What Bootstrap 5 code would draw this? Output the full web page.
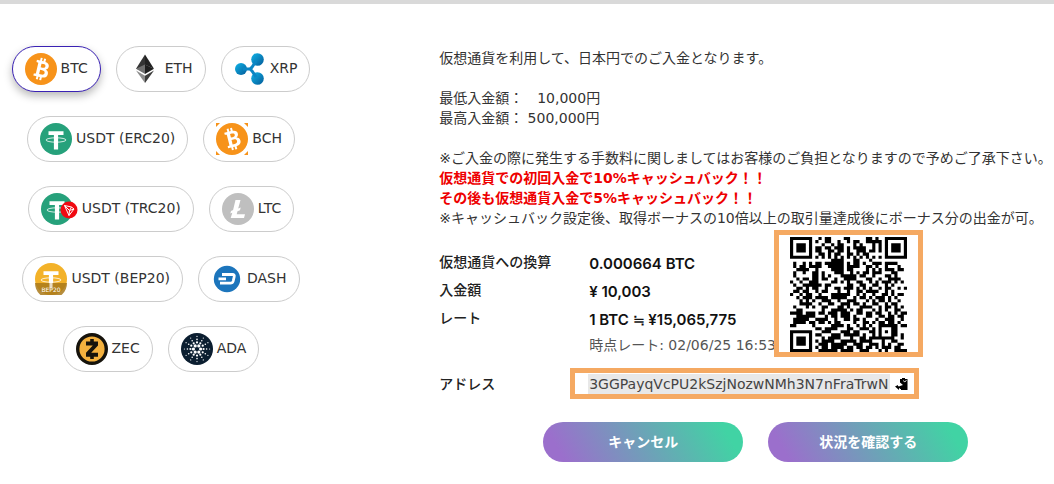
<!DOCTYPE html>
<html lang="ja">
<head>
<meta charset="utf-8">
<meta name="viewport" content="width=device-width, initial-scale=1">
<title>仮想通貨での入金</title>
<link href="https://cdn.jsdelivr.net/npm/bootstrap@5.3.0/dist/css/bootstrap.min.css" rel="stylesheet">
<style>
  body { font-family: "DejaVu Sans", "Noto Sans CJK JP", sans-serif; font-size: 14px; line-height: 20px; color: #333; background: #fff; border-top: 4px solid #d9d9d9; }
  .coin-list { max-width: 322px; gap: 24px 15px; padding-top: 42px; }
  .coin { height: 46px; padding: 0 12px; gap: 4px; border: 1px solid #ccc; border-radius: 23px; background: #fff; color: #333; }
  .coin.selected { border-color: #3a22b4; box-shadow: 0 4px 8px rgba(0,0,0,.28); }
  .coin span { padding-bottom: 2px; }
  .intro { padding-top: 44px; white-space: nowrap; }
  .intro strong { color: #ee0000; }
  .details { display: grid; grid-template-columns: 150px 1fr; margin-top: 20px; }
  .details dt { font-weight: 500; line-height: 28px; color: #222; }
  .details dd { line-height: 24px; padding-top: 4px; color: #111; white-space: nowrap; }
  .amount { font-family: Inter, "Noto Sans CJK JP", sans-serif; font-size: 15px; font-weight: 600; }
  .details .stamp { display: block; line-height: 26px; color: #555; }
  .qr-frame { position: absolute; left: 335px; top: 226px; border: 5px solid #f5a962; padding: 2px 11px 0; line-height: 0; background: #fff; }
  .address-row { margin-top: 10px; }
  .address-label { width: 131px; font-weight: 500; color: #222; }
  .address-box { border: 5px solid #f5a962; height: 31px; padding: 0 5px 0 13px; gap: 5px; background: #fff; }
  .address-box input { width: 302px; height: 20px; border: 0; padding: 0 1px; background: #e8e8e8; color: #444; font-size: 14px; }
  .actions { gap: 25px; margin-top: 23px; padding-left: 104px; }
  .action { width: 200px; height: 40px; border: 0; border-radius: 20px; color: #fff; font-weight: 700; background: linear-gradient(60deg, #9b6fcc 10%, #41d3a4 90%); }
</style>
</head>
<body>
<svg width="0" height="0" class="position-absolute" aria-hidden="true">
  <defs>
    <g id="bitcoin-b">
      <path fill="#fff" fill-rule="evenodd" d="M10 8h3.200V5h2v3h1.500V5h2v3.200c3 .3 4.300 1.800 4.300 3.800 0 1.700-.8 2.900-2.300 3.500 2.200.6 3.100 2 3.100 4 0 3-2.100 4.400-5.100 4.600V27h-2v-2.900h-1.500V27h-2v-2.900H10V22l2-.4V10.500l-2-.4zM15.300 10.700v3.700h1.800c1.700 0 2.600-.6 2.600-1.900s-.8-1.800-2.500-1.800zm0 6.200v4.500h2.200c1.900 0 2.900-.8 2.900-2.300s-1.100-2.200-3-2.200z"/>
    </g>
    <g id="tether">
      <path fill="#fff" d="M8.500 8.200h15V12h-5.400v14.500h-4.200V12H8.500z"/>
      <ellipse cx="16" cy="17" rx="10" ry="2.200" fill="none" stroke="#fff" stroke-width=".8"/>
    </g>
  </defs>
</svg>
<main class="container-fluid p-0">
  <div class="row g-0">
    <nav class="col-5" aria-label="通貨">
      <div class="coin-list d-flex flex-wrap justify-content-center">
        <button type="button" class="coin selected d-flex align-items-center" aria-pressed="true">
          <svg width="32" height="32" viewBox="0 0 32 32"><circle cx="16" cy="16" r="16" fill="#f7931a"/><use href="#bitcoin-b" transform="rotate(13 16 16)"/></svg><span>BTC</span></button>
        <button type="button" class="coin d-flex align-items-center">
          <svg width="32" height="32" viewBox="0 0 32 32"><path fill="#343434" d="M16 1.500v16.800L7 15.700z"/><path fill="#1f1f1f" d="m16 11.500 9 4.200-9 5.300z"/><path fill="#222" d="m16 1.500 9 14.200-9-4z"/><path fill="#707070" d="m16 11.500-9 4.200 9 5.300z"/><path fill="#8c8c8c" d="m7 17.500 9 5.300V30z"/><path fill="#3c3c3b" d="m25 17.500-9 5.300V30z"/></svg><span>ETH</span></button>
        <button type="button" class="coin d-flex align-items-center">
          <svg width="32" height="32" viewBox="0 0 32 32"><defs><linearGradient id="rip" x2="1" y2="1"><stop stop-color="#10b4e8"/><stop offset="1" stop-color="#045b99"/></linearGradient></defs><g fill="url(#rip)"><circle cx="7" cy="16" r="6"/><circle cx="23.500" cy="6.500" r="6.300"/><circle cx="23.500" cy="25.500" r="6.300"/></g><path d="M9 16h7l1.800-1.500L22 8m-6 8 2 2 4 6" fill="none" stroke="#0b86c4" stroke-width="3"/></svg><span>XRP</span></button>
        <button type="button" class="coin d-flex align-items-center">
          <svg width="32" height="32" viewBox="0 0 32 32"><circle cx="16" cy="16" r="16" fill="#26a17b"/><use href="#tether"/></svg><span>USDT (ERC20)</span></button>
        <button type="button" class="coin d-flex align-items-center">
          <svg width="32" height="32" viewBox="0 0 32 32"><path fill="#f7931a" d="M0 0h4L0 4zm28 0h4v4zM0 28v4h4zm32 0v4h-4z"/><circle cx="16" cy="16" r="16" fill="#f7931a"/><use href="#bitcoin-b" transform="rotate(-14 16 16)"/></svg><span>BCH</span></button>
        <button type="button" class="coin d-flex align-items-center">
          <svg width="37" height="32" viewBox="0 0 37 32"><circle cx="16" cy="16" r="16" fill="#26a17b"/><use href="#tether"/><circle cx="28" cy="17" r="8.500" fill="#f00a12"/><path fill="none" stroke="#fff" stroke-width="1" stroke-linejoin="round" d="m23.500 12.500 7 1.500 2.500 2-5 6.500zM23.500 12.500l5 5 4.500-1.500M30.500 14l-2 3.500-.5 5"/></svg><span>USDT (TRC20)</span></button>
        <button type="button" class="coin d-flex align-items-center">
          <svg width="32" height="32" viewBox="0 0 32 32"><circle cx="16" cy="16" r="16" fill="#bfbfbf"/><path fill="#fff" d="M13.500 7h5L16.200 15.500l2.500-1-.7 2.700-2.500 1-.8 3h8.300l-1 3.800H8.700l1.600-5.200-2 .8.700-2.700 2.100-.8z"/></svg><span>LTC</span></button>
        <button type="button" class="coin d-flex align-items-center">
          <svg width="32" height="32" viewBox="0 0 32 32"><circle cx="16" cy="16" r="16" fill="#f3b229"/><use href="#tether"/><path fill="#a9791a" fill-opacity=".85" d="M0 20h32a16 16 0 0 1-32 0z"/><path fill="#fff" opacity=".7" d="M14.500 20h3v5h-3z"/><text x="16" y="29" text-anchor="middle" font-size="6" fill="#fff">BEP20</text></svg><span>USDT (BEP20)</span></button>
        <button type="button" class="coin d-flex align-items-center">
          <svg width="32" height="32" viewBox="0 0 32 32"><circle cx="16" cy="16" r="13.200" fill="#1c75bc"/><path fill="none" stroke="#fff" stroke-width="2.800" stroke-linejoin="round" d="M11 11.500h10.500q2.300 0 1.700 2.200l-1 4.300q-.6 2.200-2.800 2.200H9M7.500 15.800h7.500"/></svg><span>DASH</span></button>
        <button type="button" class="coin d-flex align-items-center">
          <svg width="32" height="32" viewBox="0 0 32 32"><circle cx="16" cy="16" r="14.300" fill="#f4b13e" stroke="#16130c" stroke-width="3.400"/><path fill="#16130c" d="M14.200 6h3.600v2.500H22v4l-6.800 7.200H22v4h-4.200V26h-3.600v-2.300H10v-4l6.800-7.200H10v-4h4.200z"/></svg><span>ZEC</span></button>
        <button type="button" class="coin d-flex align-items-center">
          <svg width="32" height="32" viewBox="0 0 32 32"><circle cx="16" cy="16" r="16" fill="#0b1e30"/><g id="ada-dots" fill="#fff"></g></svg><span>ADA</span></button>
      </div>
    </nav>
    <section class="col-7 position-relative">
      <p class="intro mb-0">仮想通貨を利用して、日本円でのご入金となります。<br><br>最低入金額：　10,000円<br>最高入金額： 500,000円<br><br>※ご入金の際に発生する手数料に関しましてはお客様のご負担となりますので予めご了承下さい。<br><strong>仮想通貨での初回入金で10%キャッシュバック！！<br>その後も仮想通貨入金で5%キャッシュバック！！</strong><br>※キャッシュバック設定後、取得ボーナスの10倍以上の取引量達成後にボーナス分の出金が可。</p>
      <dl class="details mb-0">
        <dt>仮想通貨への換算</dt><dd class="mb-0"><span class="amount">0.000664 BTC</span></dd>
        <dt>入金額</dt><dd class="mb-0"><span class="amount">¥ 10,003</span></dd>
        <dt>レート</dt><dd class="mb-0"><span class="amount">1 BTC ≒ ¥15,065,775</span><span class="stamp">時点レート: 02/06/25 16:53</span></dd>
      </dl>
      <div class="qr-frame"><svg id="qr" width="117" height="115" viewBox="0 0 37 37" preserveAspectRatio="none" role="img" aria-label="入金用QRコード"><path fill="#000"/></svg></div>
      <div class="address-row d-flex align-items-center">
        <label class="address-label" for="address">アドレス</label>
        <div class="address-box d-flex align-items-center">
          <input id="address" type="text" readonly value="3GGPayqVcPU2kSzjNozwNMh3N7nFraTrwN">
          <button type="button" class="btn p-0 border-0 d-flex" aria-label="コピー"><svg width="14" height="14" viewBox="0 0 14 14"><path d="M5 2h2V1h3v1h2.500v11H6v-1H5V9l3-1-3-2.500z"/><path d="M0 9.500 3 8v1.200h3v2H4V13z"/><path fill="none" stroke="#fff" stroke-width=".8" d="M8 3.500 10 5l1.500-2"/></svg></button>
        </div>
      </div>
      <div class="actions d-flex">
        <button type="button" class="action">キャンセル</button>
        <button type="button" class="action">状況を確認する</button>
      </div>
    </section>
  </div>
</main>
<script src="https://cdn.jsdelivr.net/npm/bootstrap@5.3.0/dist/js/bootstrap.bundle.min.js"></script>
<script>
  // QR modules, one string per row
  const rows = [
    '#######..#.##....##.....##.#..#######',
    '#.....#.#..##..#..#.##..#####.#.....#',
    '#.###.#...#..#.##...#.#...#.#.#.###.#',
    '#.###.#.##.##.###.#.####..#.#.#.###.#',
    '#.###.#.##..##.##.#..###.##.#.#.###.#',
    '#.....#..##.#.##..##.#.##.....#.....#',
    '#######.#.#.#.#.#.#.#.#.#.#.#.#######',
    '.............####...##...#...........',
    '.#..#.#.##.######.#.##.#..###.####...',
    '.#.##.####..#####.####..##.#..#...#..',
    '..####..#....####.##....#.#.#.###.##.',
    '.#..#..##.#...###..#.#.##.###...##...',
    '.#.....##.#.#...#####.##..#...##.#...',
    '..#.##.##.##..#..####...##..#..####..',
    '#..#..###....##.#.#..##..#.#.###.#.#.',
    '.#..######.##.....##..##..##..#.#....',
    '..##.#.##..#..##.###.#.#.#..#.##..#.#',
    '.##.##..#.##...#..#..##.####..#.#....',
    '#..#.##..#...######..#.#..#..##.#.##.',
    '..#.###.####.#####..#.##.#.###.#.#...',
    '...#.#.#..###..#..###...#.#.##.#..#..',
    '...####..#..##..###.##.#..##..#.##...',
    '.#...#.#..##...##.#...####..#.##.#.#.',
    '..##......#..#####.#.##...#.#.#..##..',
    '####.###.##.###.###..##.##.##..#.#.##',
    '..######...#.##.###.#...##..##.##.##.',
    '.#####..####..#..##.##.#...#..###..#.',
    '.####.##.##.#.##....#..##.#.##.##.#..',
    '##.....#.....####.#..#.#.#..######.##',
    '........##.####...##..###.#.#...##...',
    '#######...###...###.##...##.#.#.##...',
    '#.....#.##...###.#####.#..#.#...##.#.',
    '#.###.#...#.####...#..##.########..#.',
    '#.###.#.#.####..#####.####...#..##...',
    '#.###.#..###.#####..###..###.#.#..##.',
    '#.....#.#.##.####.##.##.##.#.###.##..',
    '#######..######.####..###...#.#..####'
  ];
  // Each run of dark modules in a row becomes one bar
  document.querySelector('#qr path').setAttribute('d', rows.map((row, y) =>
    [...row.matchAll(/#+/g)].map(run => `M${run.index} ${y}h${run[0].length}v1h-${run[0].length}z`).join('')).join(''));

  // Rings of dots, radius / count / dot size
  const dots = [[3.6, 6, 1.6], [6.6, 12, 1.1], [9.6, 12, .8], [12.6, 12, .6]];
  document.getElementById('ada-dots').innerHTML = dots.map(([r, n, s]) =>
    Array.from({ length: n }, (_, i) => {
      const a = i * 2 * Math.PI / n;
      return `<circle cx="${16 + r * Math.cos(a)}" cy="${16 + r * Math.sin(a)}" r="${s}"/>`;
    }).join('')).join('');
</script>
</body>
</html>
